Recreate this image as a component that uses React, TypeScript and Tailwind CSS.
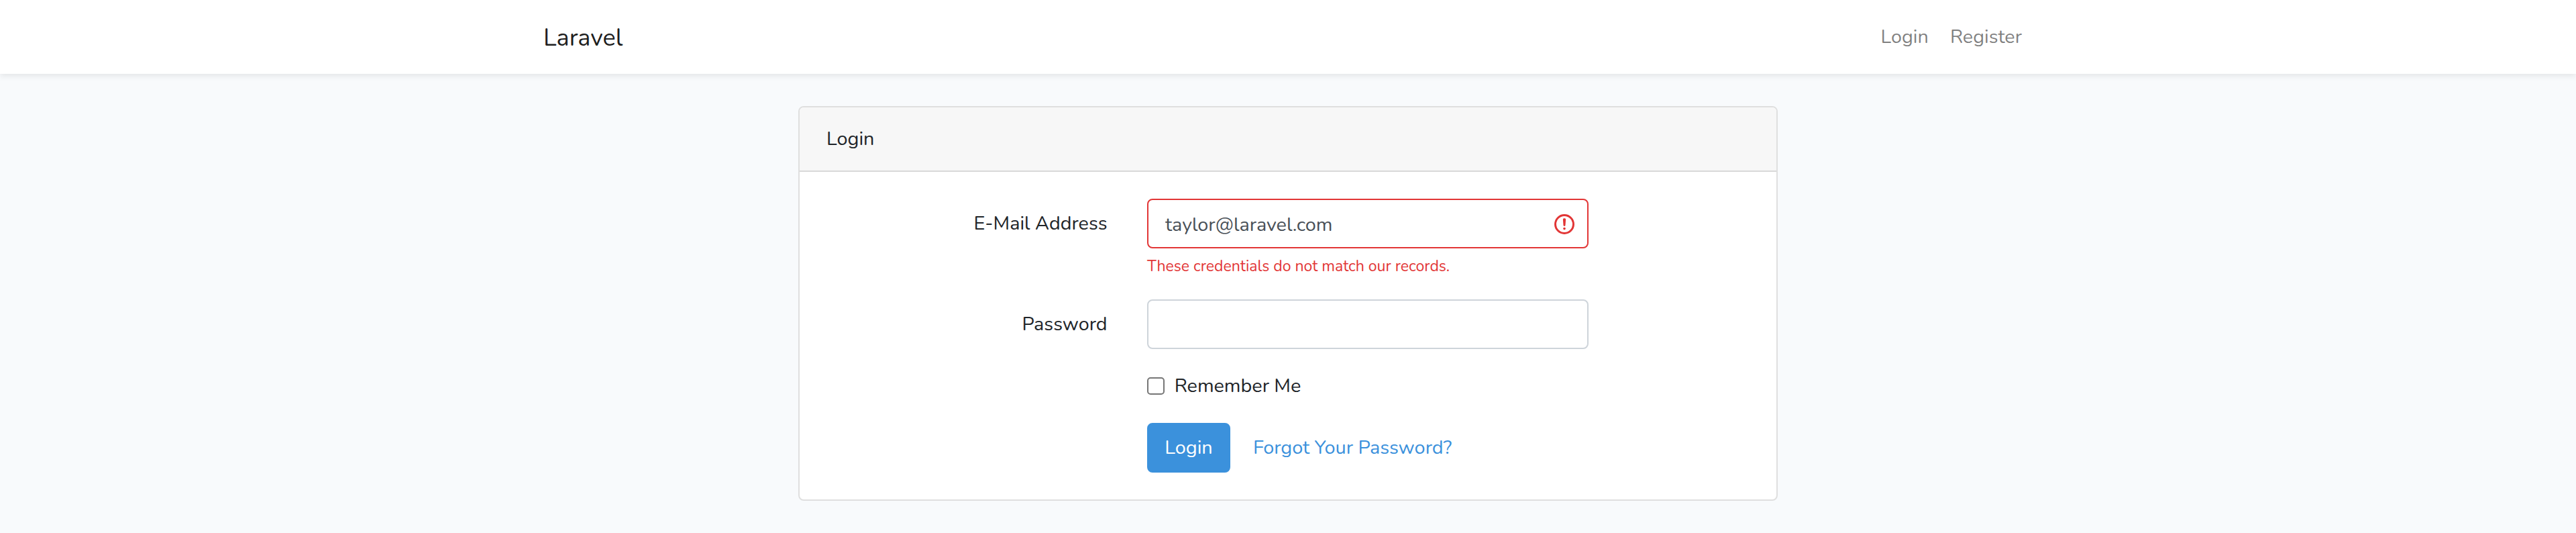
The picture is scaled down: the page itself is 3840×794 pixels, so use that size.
import type { ReactNode } from "react";

function FormRow({ label, htmlFor, children }: { label?: string; htmlFor?: string; children: ReactNode }) {
  return (
    <div className="grid grid-cols-[448.67px_658px] gap-[59.33px]">
      {label ? (
        <label htmlFor={htmlFor} className="pt-[14px] text-right">
          {label}
        </label>
      ) : (
        <span />
      )}
      <div>{children}</div>
    </div>
  );
}

function InvalidIcon() {
  return (
    <svg
      viewBox="0 0 12 12"
      className="pointer-events-none absolute top-[20px] right-[18px] h-9 w-9"
      fill="none"
      stroke="#e23636"
    >
      <circle cx="6" cy="6" r="4.5" />
      <path strokeLinejoin="round" d="M5.8 3.6h.4L6 6.5z" />
      <circle cx="6" cy="8.2" r=".6" fill="#e23636" stroke="none" />
    </svg>
  );
}

export default function App() {
  return (
    <div className="min-h-[794px] bg-[#f8fafc] font-['Nunito','Lato',sans-serif] text-[28.8px] leading-[46px] text-[#212529]">
      <header className="relative bg-white py-4 shadow-[0_4px_8px_rgba(0,0,0,0.075)]">
        <nav className="mx-auto flex w-[2280px] items-center justify-between px-[30px]">
          <a href="#" className="pt-[3px] text-[36px] leading-[57px] text-black/90">
            Laravel
          </a>
          <div className="flex text-black/50">
            <a href="#" className="p-4">
              Login
            </a>
            <a href="#" className="p-4">
              Register
            </a>
          </div>
        </nav>
      </header>

      <main className="py-12">
        <section className="mx-auto w-[1460px] rounded-lg border-2 border-[#dfdfdf] bg-white">
          <h1 className="rounded-t-md border-b-2 border-[#d9d9d9] bg-[#f7f7f7] px-10 py-6">Login</h1>
          <form className="flex flex-col gap-8 py-10 pl-[10px]">
            <FormRow label="E-Mail Address" htmlFor="email">
              <div className="relative">
                <input
                  id="email"
                  type="email"
                  defaultValue="taylor@laravel.com"
                  className="block h-[74px] w-full rounded-lg border-2 border-[#e23636] bg-white pt-[2px] pr-[70px] pl-[25px] text-[#495057]"
                />
                <InvalidIcon />
              </div>
              <p className="mt-2 h-9 pt-px text-[23.04px] leading-9 text-[#e23636]">
                These credentials do not match our records.
              </p>
            </FormRow>
            <FormRow label="Password" htmlFor="password">
              <input
                id="password"
                type="password"
                className="block h-[74px] w-full rounded-lg border-2 border-[#ced4da] bg-white px-[25px]"
              />
            </FormRow>
            <FormRow>
              <label className="flex gap-[14.67px]">
                <input
                  type="checkbox"
                  className="mt-[10px] h-[26px] w-[26px] appearance-none rounded-[5px] border-2 border-[#767676] bg-white"
                />
                Remember Me
              </label>
            </FormRow>
            <FormRow>
              <div className="flex gap-2">
                <button
                  type="button"
                  className="w-[124px] rounded-lg border-2 border-[#3b91dc] bg-[#3b91dc] py-3 text-white"
                >
                  Login
                </button>
                <a href="#" className="border-2 border-transparent px-6 py-3 text-[#3b91dc]">
                  Forgot Your Password?
                </a>
              </div>
            </FormRow>
          </form>
        </section>
      </main>
    </div>
  );
}
